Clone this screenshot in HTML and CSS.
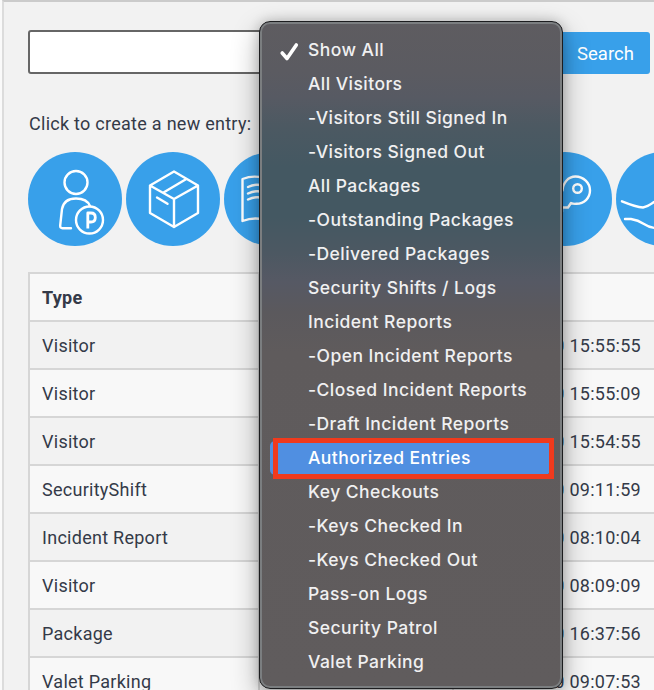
FILE: index.html
```html
<!DOCTYPE html>
<html lang="en">
<head>
<meta charset="utf-8">
<title>Entries</title>
<link rel="stylesheet" href="styles.css">
</head>
<body>
<main class="panel">
  <form class="search">
    <input class="search-input" type="text" aria-label="Search">
    <button class="search-button" type="button">Search</button>
  </form>
  <p class="hint">Click to create a new entry:</p>
  <nav class="actions">
    <a class="action"><svg viewBox="0 0 94 94"><circle cx="48" cy="30.5" r="11.5"/><path d="M43 76.3H34.5Q32 76.3 32.200 73.500L34 57Q36 46.500 48 46.500Q59 46.500 62 54"/><circle cx="61.500" cy="68" r="13.500"/><path class="bold" d="M59.800 76.500V61H63Q67.300 61 67.300 65.500Q67.300 70 63 70H60"/></svg></a>
    <a class="action"><svg viewBox="0 0 94 94"><path d="M48 19.500L72 33.500V61L48 75L24 61V33.500ZM24 33.500L48 47L72 33.500M48 47V75M37.500 40.500L59.500 27.500M31 45.500L41.500 51.800"/></svg></a>
    <a class="action"><svg viewBox="0 0 94 94"><path d="M47 30Q34 21 18.500 27V69Q34 63 47 71M24 35Q32 31 40 34M24 41.500Q32 37.500 40 40.500M24 47.500Q32 43.500 40 46.500"/></svg></a>
    <a class="action"></a>
    <a class="action"></a>
    <a class="action"><svg viewBox="0 0 94 94"><circle cx="59.500" cy="36.500" r="4.300"/><path d="M42 59.500H44V55.500H50L53 51Q55 52 58 51.800C66 52 72 46 72 38.500C72 31 65.500 24.500 57.500 24.500C50 24.500 45 31 44.500 38.500L34 51V60H42Z"/></svg></a>
    <a class="action"><svg viewBox="0 0 94 94"><path d="M6 49.300Q20 55 27 55.500Q32 54.500 38 50L48 45M9 67H15Q22 68 28 72Q34 76 40 76H48M40 29L48 25"/></svg></a>
  </nav>
  <table class="log">
    <thead><tr><th class="type">Type</th><th class="note"></th><th class="date"></th></tr></thead>
    <tbody>
      <tr><td>Visitor</td><td></td><td class="time">0 15:55:55</td></tr>
      <tr><td>Visitor</td><td></td><td class="time">0 15:55:09</td></tr>
      <tr><td>Visitor</td><td></td><td class="time">0 15:54:55</td></tr>
      <tr><td>SecurityShift</td><td></td><td class="time">0 09:11:59</td></tr>
      <tr><td>Incident Report</td><td></td><td class="time">0 08:10:04</td></tr>
      <tr><td>Visitor</td><td></td><td class="time">0 08:09:09</td></tr>
      <tr><td>Package</td><td></td><td class="time">0 16:37:56</td></tr>
      <tr><td>Valet Parking</td><td></td><td class="time">0 09:07:53</td></tr>
    </tbody>
  </table>
</main>
<ul class="menu">
  <li><svg class="check" viewBox="0 0 20 20"><path d="M3.200 11L8 16.500L17.300 3"/></svg>Show All</li>
  <li>All Visitors</li>
  <li>-Visitors Still Signed In</li>
  <li>-Visitors Signed Out</li>
  <li>All Packages</li>
  <li>-Outstanding Packages</li>
  <li>-Delivered Packages</li>
  <li>Security Shifts / Logs</li>
  <li>Incident Reports</li>
  <li>-Open Incident Reports</li>
  <li>-Closed Incident Reports</li>
  <li>-Draft Incident Reports</li>
  <li class="selected">Authorized Entries</li>
  <li>Key Checkouts</li>
  <li>-Keys Checked In</li>
  <li>-Keys Checked Out</li>
  <li>Pass-on Logs</li>
  <li>Security Patrol</li>
  <li>Valet Parking</li>
</ul>
</body>
</html>
```
FILE: styles.css
```css
* { box-sizing: border-box; }
html, body { height: 100%; overflow: hidden; }
body {
  margin: 0;
  padding-left: 2px;
  background: #fafafa;
  color: #343a48;
  font: 18px/24px Roboto, "Liberation Sans", sans-serif;
  letter-spacing: .270px;
}
.panel {
  height: 100%;
  padding: 28px 0 0 24px;
  border-left: 2px solid #dcdcdc;
  border-top: 2px solid #cbcbcb;
  background: #f2f2f2;
  overflow: hidden;
}
.search { display: flex; width: 622px; height: 44px; }
.search-input {
  flex: 1;
  min-width: 0;
  border: 2px solid #666;
  border-radius: 3px;
  background: #fff;
}
.search-button {
  width: 90px;
  height: 42px;
  margin-top: 2px;
  padding: 1px 0 0 1px;
  border: 0;
  border-radius: 3px;
  background: #38a0ea;
  color: #fff;
  font: 18.500px Roboto, "Liberation Sans", sans-serif;
}
.hint { margin: 38px 0 16px 1px; line-height: 24px; }
.actions { display: flex; gap: 4px; margin-bottom: 26px; }
.action {
  flex: none;
  width: 94px;
  height: 94px;
  border-radius: 50%;
  background: #38a0ea;
  overflow: hidden;
}
.action svg { display: block; }
.action path, .action circle {
  fill: none;
  stroke: #fff;
  stroke-width: 2.400;
  stroke-linecap: round;
  stroke-linejoin: round;
}
.action .bold { stroke-width: 2.800; stroke-linecap: butt; }
.log {
  width: 660px;
  table-layout: fixed;
  border-collapse: separate;
  border-spacing: 0;
  border: solid #d6d6d6;
  border-width: 2px 0 0 2px;
}
.log tr { background: #f2f2f2; }
.log thead tr, .log tbody tr:nth-child(even) { background: #f8f8f8; }
.log th, .log td {
  height: 48px;
  padding: 2px 12px 0;
  border-bottom: 2px solid #d6d6d6;
  border-right: 2px solid #d6d6d6;
  text-align: left;
}
.log .type { width: 230px; }
.log .note { width: 194px; }
.log .time {
  padding-right: 45px;
  text-align: right;
  white-space: nowrap;
}
.menu {
  position: absolute;
  left: 259px;
  top: 21px;
  width: 304px;
  height: 668px;
  margin: 0;
  padding: 11px 0 0;
  list-style: none;
  border: 1px solid #1c1d1f;
  border-radius: 11px;
  background: linear-gradient(#5e5c60 0, #5b5b61 50px, #575a63 75px, #4c5962 105px, #445862 145px, #445862 195px, #4c5862 230px, #565964 260px, #5b595d 290px, #5f5b5c 330px, #605c5d 100%);
  box-shadow: inset 0 0 0 2px #7b7e80, 0 10px 28px rgba(0, 0, 0, .32), 0 0 12px rgba(0, 0, 0, .2);
  color: #f0f0f1;
  font: 500 17.500px/34px Inter, "Liberation Sans", sans-serif;
  letter-spacing: .450px;
}
.menu li {
  position: relative;
  height: 34px;
  padding-left: 48px;
  white-space: nowrap;
}
.check {
  position: absolute;
  left: 19px;
  top: 9px;
  width: 20px;
  height: 20px;
}
.check path {
  fill: none;
  stroke: #fff;
  stroke-width: 3.600;
  stroke-linecap: round;
  stroke-linejoin: round;
}
.menu .selected { color: #fff; z-index: 0; }
.selected::before {
  content: "";
  position: absolute;
  z-index: -2;
  inset: 0 12px 0 10px;
  border-radius: 5px;
  background: #508fe1;
}
.selected::after {
  content: "";
  position: absolute;
  z-index: -1;
  inset: -3px 8px -4px 13px;
  border: 5px solid #f03a1d;
}
```
